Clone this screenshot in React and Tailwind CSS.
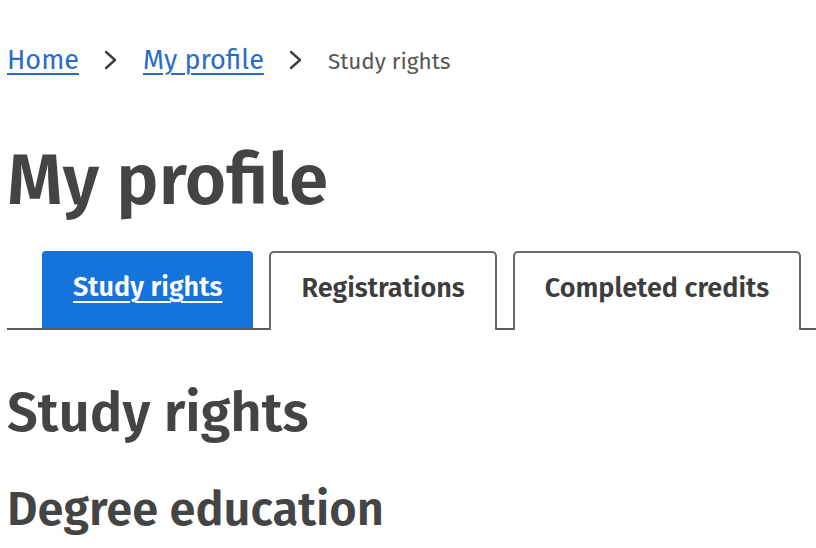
import React from "react";

function Chevron() {
  return (
    <svg width="16" height="22" viewBox="0 0 16 22" fill="none" className="mx-[24px] self-center">
      <path d="M3 3 L12 11 L3 19" stroke="#404040" strokeWidth="2.4" strokeLinecap="round" strokeLinejoin="round" />
    </svg>
  );
}

function Tab({ label, active }) {
  return active ? (
    <a
      href="#"
      className="flex h-[77px] items-center rounded-t-[4px] bg-[#1573dc] px-[31px] pb-[4px] text-[27px] font-semibold text-white underline decoration-2 underline-offset-[5px]"
    >
      {label}
    </a>
  ) : (
    <button className="-mb-[2px] flex h-[79px] items-center rounded-t-[5px] border-2 border-b-0 border-[#6a6a6a] bg-white px-[30px] pb-[6px] text-[27px] font-semibold text-[#3d3d3d]">
      {label}
    </button>
  );
}

export default function App() {
  return (
    <div className="h-[548px] overflow-hidden bg-white pl-[7px] pt-[43px] text-[#444] [font-family:'Fira_Sans','Open_Sans',sans-serif]">
      <nav className="flex h-[34px] items-baseline text-[27px] leading-[34px]">
        <a href="#" className="text-[#2a6cc8] underline decoration-2 underline-offset-[4px]">Home</a>
        <Chevron />
        <a href="#" className="text-[#2a6cc8] underline decoration-2 underline-offset-[4px]">My profile</a>
        <Chevron />
        <span className="text-[22.5px] text-[#555]">Study rights</span>
      </nav>
      <h1 className="mt-[59px] text-[71px] font-semibold leading-[90px]">My profile</h1>
      <div className="mt-[25px] flex gap-[16px] border-b-2 border-[#5a5a5a] pl-[35px]">
        <Tab label="Study rights" active />
        <Tab label="Registrations" />
        <Tab label="Completed credits" />
      </div>
      <h2 className="mt-[50px] text-[54.5px] font-semibold leading-[66px]">Study rights</h2>
      <h3 className="mt-[34px] text-[47px] font-semibold leading-[58px]">Degree education</h3>
    </div>
  );
}
